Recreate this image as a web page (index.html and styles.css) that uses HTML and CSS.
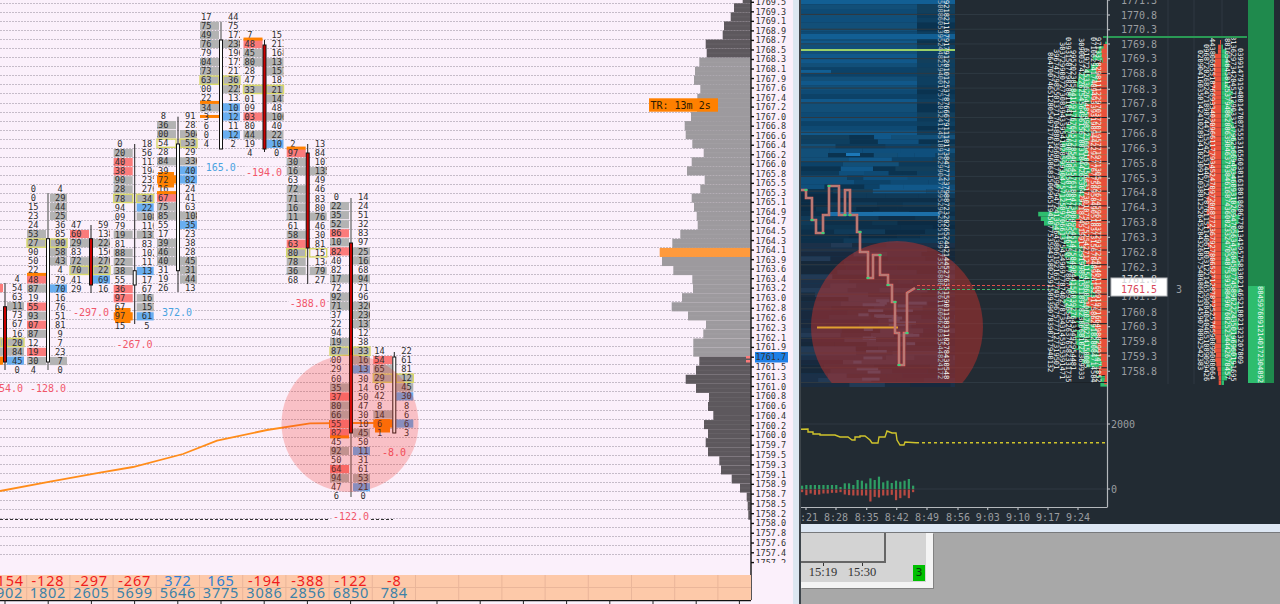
FILE: index.html
```html
<!DOCTYPE html>
<html lang="en">
<head>
    <meta charset="UTF-8">
    <title>Footprint chart</title>
    <link rel="stylesheet" href="styles.css">
</head>
<body>
    <div class="left-pane">
        <svg id="footprint" class="chart" width="793" height="604" viewBox="0 0 793 604"></svg>
    </div>
    <div class="divider"></div>
    <div class="right-pane">
        <svg id="heatmap" class="chart" width="479" height="524" viewBox="801 0 479 524"></svg>
        <div class="title-strip"></div>
        <div class="lower-area">
            <div class="mini-window">
                <div class="mini-inner"></div>
                <div class="mini-foot">
                    <span class="mini-time">15:19</span>
                    <span class="mini-time">15:30</span>
                    <span class="mini-badge">3</span>
                </div>
            </div>
        </div>
    </div>
    <script src="charts.js"></script>
</body>
</html>
```

FILE: styles.css
```css
body {
    margin: 0;
    width: 1280px;
    height: 604px;
    display: flex;
    overflow: hidden;
    background: #a8a8a8;
    font-family: "DejaVu Sans Mono", monospace;
}

.chart {
    display: block;
}

.left-pane {
    width: 793px;
    height: 604px;
    background: #fbf0fb;
}

.divider {
    width: 8px;
    height: 604px;
    box-sizing: border-box;
    background: #dce7f1;
    border-right: 2px solid #3d444a;
}

.right-pane {
    width: 479px;
    height: 604px;
    display: flex;
    flex-direction: column;
}

.title-strip {
    height: 8px;
    background: #dde7f3;
    border-bottom: 1px solid #77797c;
}

.lower-area {
    flex: 1;
    background: #a8a8a8;
}

.mini-window {
    width: 132px;
    height: 55px;
    box-sizing: border-box;
    background: #d4d4d4;
    border-right: 7px solid #f4f4f4;
    border-bottom: 6px solid #f4f4f4;
    box-shadow: 1px 1px 0 #828282;
}

.mini-inner {
    width: 83px;
    height: 28px;
    background: #d3d3d3;
    border-right: 2px solid #666;
    border-bottom: 2px solid #666;
}

.mini-foot {
    position: relative;
    height: 19px;
    font-family: "Liberation Serif", serif;
    font-size: 12.5px;
    color: #333;
}

.mini-time {
    position: absolute;
    top: 2px;
    width: 30px;
    text-align: center;
}

.mini-time:nth-child(1) { left: 7px; }
.mini-time:nth-child(2) { left: 46px; }

.mini-time::before {
    content: '';
    position: absolute;
    left: 15px;
    top: -2px;
    width: 1px;
    height: 3px;
    background: #333;
}

.mini-badge {
    position: absolute;
    left: 112px;
    top: 2px;
    width: 12px;
    height: 16px;
    background: #00c000;
    text-align: center;
    font-family: "DejaVu Sans", sans-serif;
    font-size: 11px;
    line-height: 16px;
    color: #0c3a0c;
}

/* footprint cells */
.cell-g { fill: #b3b3b3; }
.cell-r { fill: #fb7b7b; }
.cell-b { fill: #69aef0; }
.cell-o { fill: #ff8000; }
.cell-y { fill: #b3b3b3; stroke: #d9d96a; stroke-width: 1.4; }
.cell-w { fill: none; stroke: #d9d96a; stroke-width: 1.4; }

.cell-text {
    font-family: "DejaVu Sans Mono", monospace;
    font-size: 8.7px;
    fill: #2e2e2e;
}

.grid-line {
    stroke: #c6bcc9;
    stroke-width: 1;
    stroke-dasharray: 2 1;
}

.bar-red { fill: #cc0000; stroke: #111; stroke-width: 1; }
.bar-white { fill: #fff; stroke: #111; stroke-width: 1; }
.wick { stroke: #222; stroke-width: 1; }
.wick-gray { stroke: #777; stroke-width: 1.4; }

.delta-label {
    font-family: "DejaVu Sans Mono", monospace;
    font-size: 10px;
    text-anchor: middle;
    fill: #f0566a;
}

.delta-blue { fill: #4aa3e0; }
.delta-back { fill: #fbf0fb; }

.vwap {
    fill: none;
    stroke: #ff8c1a;
    stroke-width: 1.8;
}

.zone-circle { fill: rgba(243, 40, 28, 0.24); }

.dash-line {
    stroke: #333;
    stroke-width: 1;
    stroke-dasharray: 3 2;
}

.profile-light { fill: #9d9a9e; }
.profile-dark { fill: #5d585d; }
.profile-poc { fill: #ff9a3c; }
.profile-sep { stroke: rgba(255, 255, 255, 0.06); stroke-width: 1; }

.tr-box { fill: #ff8000; }
.tr-text {
    font-family: "DejaVu Sans Mono", monospace;
    font-size: 10px;
    fill: #2a1a00;
}

.axis-line { stroke: #111; stroke-width: 1.4; }
.axis-text {
    font-family: "DejaVu Sans Mono", monospace;
    font-size: 8.5px;
    fill: #333;
}

.price-box { fill: #1e7fe6; }

.strip-bg { fill: #fdc9a9; }
.strip-line { stroke: #eab69a; stroke-width: 1; }
.strip-text {
    font-family: "Noto Sans", sans-serif;
    font-size: 14.5px;
    letter-spacing: 0.8px;
    text-anchor: middle;
}

.strip-red { fill: #f01c1c; }
.strip-blue { fill: #2f7fd4; }
.strip-vol { fill: #3c82a8; }

/* dark chart */
.dark-bg { fill: #222b33; }
.dark-grid { stroke: #2e3942; stroke-width: 1; }
.dark-axis { stroke: #b4b8bc; stroke-width: 1.2; }
.dark-text {
    font-family: "DejaVu Sans Mono", monospace;
    font-size: 10px;
    fill: #9a9da0;
}

.heat-circle { fill: rgba(190, 50, 45, 0.5); }
.level-green { stroke: #9bd068; stroke-width: 2; }
.level-orange { stroke: #e0a030; stroke-width: 2; }
.level-top { stroke: #2a9a55; stroke-width: 2; }

.step-outer { fill: none; stroke: #e2685f; stroke-width: 2.6; }
.step-inner { fill: none; stroke: #8d8d8d; stroke-width: 0.9; }
.step-tip { fill: #3fcf7a; }
.step-dash-red { stroke: #e0504a; stroke-width: 1; stroke-dasharray: 3 2; }
.step-dash-green { stroke: #43b56a; stroke-width: 1; stroke-dasharray: 3 2; }

.prof-green { fill: #2ebd6e; }
.prof-red { fill: #e8503a; }
.prof-deep { fill: #1f8a4d; }
.prof-gap { fill: #13181c; }
.prof-lines { stroke: #1c2228; stroke-width: 1; }

.tiny-text {
    font-family: "DejaVu Sans Mono", monospace;
    font-size: 7px;
    fill: #f4f7f5;
}

.tiny-faint { fill: #aeb9c0; }

.last-box { fill: #fff; stroke: #b9bcbf; stroke-width: 1; }
.last-text { fill: #d9485a; }
.last-ghost { fill: #d4d6d8; }

.cvd-solid { fill: none; stroke: #cfc42c; stroke-width: 1.4; }
.cvd-dash { stroke: #cfc42c; stroke-width: 1.4; stroke-dasharray: 3 3; }
.hist-up { fill: #2e9e63; }
.hist-down { fill: #b84a42; }
```

FILE: charts.js
```js
const PITCH = 9.07;

// each pair: bar x, first row y, bar kind, body top/bottom, wick top/bottom, rows [left, right]
// suffix: g gray, r red, b blue, o orange, y yellow+gray, w yellow only, ^ orange strip, q thin orange
const pairs = [
    { x: 5, y: 279, kind: 'red', body: [306.7, 362], wick: [283, 370], rows: [
        [null, '4'], ['r', '54'], [null, '63'], [null, '11g'], [null, '73'], [null, '67'], [null, '167'],
        ['y', '20y'], ['g', '84g'], ['o', '45b'], [null, '0']
    ] },
    { x: 48, y: 188.7, kind: 'white', body: [238.7, 362], wick: [193, 370], gray: true, rows: [
        ['0', '4'], ['0', '29g'], ['15', '44g'], ['23', '25g'], ['24', '36'], ['53g', '85'], ['27y', '90y'],
        ['90', '58g'], ['50', '43g'], ['22', '4'], ['48r^', '79'], ['87g', '70b'], ['19', '16'], ['55r', '76'],
        ['93g', '51'], ['07r', '81'], ['87g', '9'], ['12', '7'], ['19r', '23'], ['30g', '7g'], ['4', '0']
    ] },
    { x: 91, y: 225, kind: 'red', body: [238.7, 285], wick: [225, 293], rows: [
        ['47', '59'], ['160r', '138'], ['129g', '224g'], ['183', '156'], ['172g', '270g'], ['70y', '22y'],
        ['141', '69b'], ['29', '16']
    ] },
    { x: 134.7, y: 144, kind: 'white', body: [270.7, 285], wick: [144, 324], rows: [
        ['0', '18'], ['20g', '56'], ['140r', '113'], ['138r', '194'], ['190g', '235'], ['128g', '276'],
        ['78y', '34y'], ['194', '22b'], ['109', '108g'], ['79', '116'], ['19g', '137g'], ['81', '83'],
        ['88g', '102'], ['22g', '117'], ['138g', '13b'], ['55', '17'], ['36r', '67'], ['97r', '16g'],
        ['67', '157g'], ['97o', '61b'], ['15', '5']
    ] },
    { x: 178, y: 116, kind: 'white', body: [144, 270.7], wick: [116.7, 292], rows: [
        ['8', '91'], ['136g', '281'], ['100g', '504g'], ['54w', '53y'], ['128', '291'], ['184g', '336g'],
        ['139', '40b'], ['72o', '82b'], ['16', '24'], ['67r^', '41'], ['75g', '63'], ['85g', '108g'],
        ['55', '35b'], ['17', '23'], ['39g', '38'], ['46g', '28'], ['40g', '45g'], ['31', '31g'], ['19', '44g'],
        ['26', '13']
    ] },
    { x: 221, y: 16.7, kind: 'white', body: [40, 149], wick: [21.7, 149], gray: true, rows: [
        ['17', '44'], ['75g', '75'], ['149g', '172'], ['76g', '238g'], ['179', '196'], ['304g', '175'],
        ['273g', '217'], ['63y', '36y'], ['200', '225g'], ['122', '133'], ['34g^', '10b'], ['3q', '12b'], ['6', '11'],
        ['0', '12b'], ['4', '2']
    ] },
    { x: 264.5, y: 35, kind: 'red', body: [45, 149], wick: [40, 152], rows: [
        ['7', '15'], ['48r^', '213'], ['145g', '168'], ['180g', '13g'], ['128', '157g'], ['147', '181'],
        ['33y', '21y'], ['101', '147g'], ['109', '48'], ['103r', '106g'], ['80', '40'], ['44g', '22g'],
        ['19', '10b'], ['4', '0']
    ] },
    { x: 307.7, y: 144, kind: 'red', body: [153, 248], wick: [144, 284], rows: [
        ['2', '13'], ['97r^', '84'], ['130g', '107'], ['16g', '135g'], ['63', '49'], ['72g', '46'], ['71g', '83'],
        ['116g', '80'], ['111g', '76g'], ['61', '46'], ['58g', '30'], ['63r', '81'], ['80y', '15w'], ['78g', '134'],
        ['136g', '79g'], ['68', '27']
    ] },
    { x: 351, y: 197, kind: 'red', body: [243, 433], wick: [198, 497], gray: true, rows: [
        ['0', '14'], ['22g', '24'], ['35g', '51'], ['52g', '32'], ['86r', '83'], ['110g', '97'], ['182r', '25g'],
        ['140', '16g'], ['182', '68'], ['117g', '94g'], ['72', '71'], ['92g', '96'], ['71g', '320g'], ['237', '230g'],
        ['122', '137g'], ['94', '121'], ['119g', '38'], ['87y', '33y'], ['300', '16g'], ['129', '13b'], ['60', '30'],
        ['35g', '14'], ['37r', '50'], ['80g', '47'], ['66g', '30'], ['55r', '10'], ['82r', '45g'], ['45^', '50'],
        ['92g', '11b'], ['50', '31'], ['64r', '61'], ['94g', '53g'], ['47', '21b'], ['6', '0']
    ] },
    { x: 394.3, y: 351, kind: 'white', body: [357, 433], wick: [352, 433], rows: [
        ['14', '22'], ['54r', '61'], ['65g', '81'], ['29y', '12y'], ['69', '45g'], ['42', '30b'], ['8', '8'],
        ['14g', '6'], ['6o', '6b'], ['1', '3']
    ] }
];

const orangeBoxes = [[115, 308, 15.5, 15], [158, 172, 16, 15.5], [375, 419, 15, 13.5], [329, 420, 20, 8]];

const deltaLabels = [
    ['-154.0', 5, 392], ['-128.0', 48, 392], ['-297.0', 91, 315.5], ['372.0', 177, 315.5, 1],
    ['-267.0', 134.5, 347.5], ['165.0', 220.7, 171, 1], ['-194.0', 264, 175.5], ['-388.0', 307.7, 306.5],
    ['-122.0', 351, 519.5], ['-8.0', 394, 455.5]
];

const profileLefts = [
    742.7, 734, 730.7, 724, 722.7, 705.7, 706.7, 699.3, 695, 694, 700.3, 697.3, 697, 691, 684.7, 685.7, 692.3,
    703.7, 691.7, 687, 704.7, 700.3, 691.7, 694, 696.7, 697.7, 680.3, 672.3, 659.7, 662, 673.3, 692.3, 693, 682,
    671.7, 688, 706, 703.3, 693.3, 693.3, 699.3, 696, 685.7, 696, 709, 708, 713.3, 704, 708, 705.7, 708, 719.3,
    721, 731.7, 740, 746.7, 747.7, 748.3
];

const axisPrices = [
    '1769.5', '1769.3', '1769.1', '1768.9', '1768.7', '1768.5', '1768.3', '1768.1', '1767.9', '1767.6', '1767.4',
    '1767.2', '1767.0', '1766.8', '1766.6', '1766.4', '1766.2', '1766.0', '1765.8', '1765.5', '1765.3', '1765.1',
    '1764.9', '1764.7', '1764.5', '1764.3', '1764.1', '1763.9', '1763.6', '1763.4', '1763.2', '1763.0', '1762.8',
    '1762.6', '1762.3', '1762.1', '1761.9', '1761.7', '1761.5', '1761.3', '1761.0', '1760.8', '1760.6', '1760.4',
    '1760.2', '1760.0', '1759.7', '1759.5', '1759.3', '1759.1', '1758.9', '1758.7', '1758.5', '1758.2', '1758.0',
    '1757.8', '1757.6', '1757.4', '1757.2'
];

const stripDelta = [
    ['-154', 7.5, 'red'], ['-128', 48, 'red'], ['-297', 91.5, 'red'], ['-267', 134.7, 'red'], ['372', 178, 'blue'],
    ['165', 221, 'blue'], ['-194', 264.5, 'red'], ['-388', 307.7, 'red'], ['-122', 351, 'red'], ['-8', 394.3, 'red']
];
const stripVolume = ['2902', '1802', '2605', '5699', '5646', '3775', '3086', '2856', '6850', '784'];

const darkPrices = [
    ['1771.3', 0], ['1770.8', 15], ['1770.3', 29.7], ['1769.8', 44], ['1769.3', 58.7], ['1768.8', 73.7],
    ['1768.3', 89.3], ['1767.8', 103.7], ['1767.3', 118.3], ['1766.8', 133.3], ['1766.3', 148], ['1765.8', 163.7],
    ['1765.3', 178.3], ['1764.8', 192.7], ['1764.3', 207.3], ['1763.8', 222], ['1763.3', 237.3], ['1762.8', 252.3],
    ['1762.3', 267], ['1761.3', 296.7], ['1760.8', 312], ['1760.3', 326.7], ['1759.8', 341.3], ['1759.3', 356],
    ['1758.8', 371.3]
];

const darkTimes = [
    ['8:21', 806], ['8:28', 836], ['8:35', 866.7], ['8:42', 896.7], ['8:49', 927], ['8:56', 958], ['9:03', 987.7],
    ['9:10', 1018], ['9:17', 1048], ['9:24', 1078]
];

const greenEdge = [
    [37, 1105], [50, 1098], [60, 1093], [77, 1077], [95, 1068], [117, 1068], [133, 1063], [160, 1062], [187, 1058],
    [208, 1058], [212, 1040], [220, 1040], [223, 1050], [237, 1062], [253, 1065], [263, 1070], [280, 1072],
    [297, 1063], [310, 1070], [327, 1077], [347, 1077], [360, 1085], [370, 1097], [383, 1103]
];
const redEdge = [
    [44, 1105], [50, 1103], [67, 1098], [100, 1088], [167, 1090], [200, 1080], [217, 1077], [233, 1078], [253, 1083],
    [267, 1093], [293, 1093], [300, 1087], [317, 1092], [340, 1098], [367, 1100], [383, 1105]
];
const red2Edge = [[40, 1219], [60, 1214], [100, 1212], [200, 1208], [260, 1209], [300, 1212], [383, 1218]];
const green2Edge = [[40, 1222], [50, 1226], [100, 1232], [200, 1238], [300, 1238], [360, 1235], [383, 1224]];

const stepPath = [
    [801, 190], [806, 190], [806, 198], [812, 198], [812, 220], [816, 220], [816, 233], [823, 233], [823, 215],
    [829, 215], [829, 186], [839, 186], [839, 215], [845, 215], [845, 190], [850, 190], [850, 215], [857, 215],
    [857, 232], [860, 232], [860, 252], [868, 252], [868, 278], [873, 278], [873, 255], [880, 255], [880, 275],
    [888, 275], [888, 285], [892, 285], [892, 302], [895, 302], [895, 333], [899, 333], [899, 365], [904, 365],
    [904, 333], [907, 333], [907, 293], [915, 288]
];

const cvdPath = [
    [801, 429.3], [808, 429], [808, 432], [813, 432], [813, 434], [820, 434], [820, 435], [835, 435], [840, 437],
    [848, 437], [852, 440], [855, 440], [855, 437], [860, 437], [860, 436], [865, 436], [870, 440], [872, 443],
    [878, 443], [879, 437], [885, 437], [887, 431], [892, 433], [896, 433], [897, 440], [900, 445], [904, 445],
    [905, 442], [916, 442.7]
];

const histUp = [10, 12, 12, 12, 12, 12, 12, 12, 12, 6, 17, 17, 12, 27, 25, 17, 32, 27, 37, 20, 25, 18, 25, 22, 25, 30, 10];
const histDown = [8, 17, 12, 16, 15, 12, 12, 10, 10, 8, 15, 17, 18, 18, 18, 18, 36, 22, 24, 18, 18, 16, 32, 26, 18, 26, 8];

// small seeded random so the picture is the same on every load
let seed = 4711;
function rnd() {
    seed = (seed * 16807) % 2147483647;
    return seed / 2147483647;
}

function pick(list) {
    return list[Math.floor(rnd() * list.length)];
}

function digits(count) {
    let out = '';
    for (let i = 0; i < count; i++) {
        out += Math.floor(rnd() * 10);
    }
    return out;
}

function rect(x, y, w, h, cls, fill) {
    const paint = fill ? ` fill="${fill}"` : '';
    return `<rect x="${x}" y="${y}" width="${w}" height="${h}" class="${cls}"${paint}/>`;
}

function line(x1, y1, x2, y2, cls) {
    return `<line x1="${x1}" y1="${y1}" x2="${x2}" y2="${y2}" class="${cls}"/>`;
}

function text(x, y, str, cls, extra) {
    return `<text x="${x}" y="${y}" class="${cls}" ${extra || ''}>${str}</text>`;
}

function points(list) {
    return list.map(p => p.join(',')).join(' ');
}

// value of a [y, x] edge table at height y
function edgeAt(edge, y) {
    for (let i = 1; i < edge.length; i++) {
        if (y <= edge[i][0]) {
            const t = (y - edge[i - 1][0]) / (edge[i][0] - edge[i - 1][0]);
            return edge[i - 1][1] + (edge[i][1] - edge[i - 1][1]) * t;
        }
    }
    return edge[edge.length - 1][1];
}

// profile drawn as rows, so the edge comes out stepped like the real thing
function steppedProfile(edge, rightFn, cls, jitter, gaps) {
    let out = '';
    const first = edge[0][0];
    const last = edge[edge.length - 1][0];
    for (let y = first; y < last; y += 4.6) {
        const left = edgeAt(edge, y) + (rnd() - 0.5) * jitter;
        const right = rightFn(y);
        if (right > left) out += rect(left, y, right - left, 4.6, cls);
        if (gaps && rnd() < 0.28) {
            out += rect(left, y, 3 + rnd() * 6, 3.2, 'prof-gap');
        }
    }
    return out;
}

function drawCell(value, barX, cy, side, clipId) {
    if (value === null) return '';
    const m = value.match(/^(\d*)([a-z]?)(\^?)$/);
    const x = side === 'left' ? barX - 21 : barX + 2;
    const w = side === 'left' ? 19 : 17;
    let out = '';
    if (m[2] === 'q') {
        out += rect(x, cy - 1.5, w, 3, 'cell-o');
    } else if (m[2]) {
        out += rect(Math.max(x, 0), cy - 4.1, w + Math.min(x, 0), 8.2, 'cell-' + m[2]);
    }
    if (m[3]) {
        out += rect(x, cy - 6.5, w, 3, 'cell-o');
    }
    if (!m[1]) return out;
    const single = m[1].length === 1 ? 2.6 : 0;
    const tx = side === 'left' ? barX - 9.5 - single : barX + 7 + single;
    const anchor = side === 'left' ? 'end' : 'start';
    return out + text(tx, cy + 3.1, m[1], 'cell-text', `text-anchor="${anchor}" clip-path="url(#${clipId})"`);
}

function buildFootprint() {
    let defs = '<defs>';
    let grid = '';
    let cells = '';
    let bars = '';

    for (let k = -1; k < 61; k++) {
        const y = Math.round(12.2 + 9.03 * k) + 0.5;
        if (y > 0 && y < 575) grid += line(0, y, 751, y, 'grid-line');
    }

    pairs.forEach((p, i) => {
        defs += `<clipPath id="cl${i}"><rect x="${p.x - 21}" y="0" width="19" height="604"/></clipPath>`;
        defs += `<clipPath id="cr${i}"><rect x="${p.x + 2}" y="0" width="17" height="604"/></clipPath>`;
        p.rows.forEach((row, r) => {
            const cy = p.y + PITCH * r;
            cells += drawCell(row[0], p.x, cy, 'left', 'cl' + i);
            cells += drawCell(row[1], p.x, cy, 'right', 'cr' + i);
        });
        bars += line(p.x, p.wick[0], p.x, p.wick[1], p.gray ? 'wick-gray' : 'wick');
        bars += rect(p.x - 1.5, p.body[0], 3, p.body[1] - p.body[0], p.kind === 'red' ? 'bar-red' : 'bar-white');
    });
    defs += '<clipPath id="axisClip"><rect x="751" y="0" width="42" height="563"/></clipPath></defs>';

    let boxes = '';
    orangeBoxes.forEach(b => { boxes += rect(b[0], b[1], b[2], b[3], 'cell-o'); });

    let labels = '';
    labels += line(0, 519.5, 330, 519.5, 'dash-line') + line(371, 519.5, 393, 519.5, 'dash-line');
    deltaLabels.forEach(d => {
        const w = d[0].length * 6.1 + 2;
        labels += rect(Math.max(d[1] - w / 2, 0), d[2] - 9, w, 11, 'delta-back');
        labels += text(d[1], d[2], d[0], d[3] ? 'delta-label delta-blue' : 'delta-label');
    });

    const vwap = `<polyline class="vwap" points="0,491 50,481.7 100,472.7 133,467 183,454 217,440.7 267,430 310,423.3 350,423 390,423"/>`;
    const zone = '<circle cx="350" cy="423.5" r="68.5" class="zone-circle"/>';

    let profile = '';
    profileLefts.forEach((left, k) => {
        const top = k === 0 ? 0 : 3.3 + 9.06 * (k - 1);
        const h = k === 0 ? 3.3 : 9.06;
        let cls = k <= 6 || k >= 40 ? 'profile-dark' : 'profile-light';
        if (k === 28) cls = 'profile-poc';
        profile += rect(left, top, 750.7 - left, h, cls);
        if (k > 0 && k !== 28 && k !== 29) profile += line(left, top + 4.5, 750.7, top + 4.5, 'profile-sep');
    });
    profile += rect(649, 98.3, 69, 13.4, 'tr-box') + text(650.5, 108.5, 'TR: 13m 2s', 'tr-text');
    profile += rect(746, 356, 5, 2.5, 'cell-r', '#e02020') + rect(746, 360, 5, 2.5, 'cell-r', '#22b04a');

    let axis = line(751, 0, 751, 600, 'axis-line') + line(0, 600.5, 751, 600.5, 'axis-line');
    let axisTexts = '';
    axisPrices.forEach((price, i) => {
        const y = i <= 31 ? 2.3 + 9.53 * i : 308.3 + 9.78 * (i - 32);
        if (y < 563) axis += line(751, y, 754, y, 'axis-line');
        axisTexts += text(755.5, y + 3, price, 'axis-text');
    });
    axis += rect(755, 352, 33, 10.5, 'price-box');
    axis += `<g clip-path="url(#axisClip)">${axisTexts}</g>`;

    let strip = rect(0, 575, 751, 25, 'strip-bg') + line(0, 587.5, 751, 587.5, 'strip-line');
    for (let x = 26.7; x < 751; x += 43.2) {
        strip += line(x, 575, x, 600, 'strip-line');
    }
    stripDelta.forEach((d, i) => {
        strip += text(d[1], 586, d[0], 'strip-text strip-' + d[2]);
        strip += text(i === 0 ? 5 : d[1], 598, stripVolume[i], 'strip-text strip-vol');
    });
    for (let x = 5; x < 751; x += 43.2) {
        strip += line(x, 600, x, 604, 'wick');
    }

    document.getElementById('footprint').innerHTML =
        defs + grid + vwap + boxes + cells + bars + labels + zone + profile + axis + strip;
}

function buildHeat() {
    const bright = ['#0f4f7c', '#11588a', '#0c4268', '#124f78', '#0e4a74'];
    const dim = ['#0c3a5a', '#0e3f60', '#123f5c', '#0a3350'];
    const dark = ['#0d2f49', '#0e3550', '#103a58', '#0b2b44'];
    const low = ['#1b3048', '#18293e', '#223a55', '#16283a', '#1a2c40'];
    let out = rect(801, 0, 154, 383, 'heat-base', '#103a58');

    for (let y = 0; y < 383; y += 4.5) {
        if (y < 135) {
            out += rect(801, y, 116, 4.5, 'heat', pick(bright));
            out += rect(917, y, 38, 4.5, 'heat', pick(dim));
        } else {
            const colors = y < 190 ? bright.concat(dim) : y < 240 ? dark : low;
            let x = 801;
            while (x < 955) {
                const w = Math.min(955 - x, 14 + rnd() * 42);
                out += rect(x, y, w, 4.5, 'heat', pick(colors));
                x += w;
            }
        }
    }
    // bluish patches that show through the circle
    for (let i = 0; i < 26; i++) {
        out += rect(850 + rnd() * 60, 296 + rnd() * 84, 6 + rnd() * 18, 3, 'heat', '#2f5478');
    }
    out += rect(801, 0, 154, 4, 'heat', '#125f94') + rect(801, 34, 154, 5, 'heat', '#125f94');
    out += rect(801, 70, 30, 4, 'heat', '#125f94') + rect(846, 153, 14, 3, 'heat', '#1c78b8');
    out += rect(830, 212, 110, 4, 'heat', '#1c6fa8');
    return out;
}

function buildTinyColumn(x, top, bottom, cls) {
    const count = Math.floor((bottom - top) / 4.21);
    return text(x, top, digits(count), cls, `transform="rotate(90 ${x} ${top})"`);
}

function buildDark() {
    let out = rect(801, 0, 479, 524, 'dark-bg');

    // faint horizontal grid, then vertical one
    for (let y = 14.5; y < 384; y += 14.72) {
        out += line(955, y, 1107, y, 'dark-grid');
    }
    [1168, 1194, 1222].forEach(x => { out += line(x, 0, x, 384, 'dark-grid'); });
    out += line(801, 424, 1107, 424, 'dark-grid') + line(801, 489, 1107, 489, 'dark-grid');

    out += buildHeat();
    for (let y = 14.5; y < 384; y += 14.72) {
        out += line(801, y, 955, y, 'dark-grid');
    }
    out += '<clipPath id="heatClip"><rect x="801" y="0" width="320" height="383"/></clipPath>';
    out += '<circle cx="897" cy="327" r="86" class="heat-circle" clip-path="url(#heatClip)"/>';

    out += line(801, 50, 955, 50, 'level-green');
    out += buildTinyColumn(938, 0, 383, 'tiny-text tiny-faint');
    out += buildTinyColumn(944, 0, 383, 'tiny-text');

    out += line(917, 285.5, 1105, 285.5, 'step-dash-red') + line(917, 289.5, 1105, 289.5, 'step-dash-green');
    out += line(817, 327.5, 898, 327.5, 'level-orange');
    out += `<polyline class="step-outer" points="${points(stepPath)}"/>`;
    out += `<polyline class="step-inner" points="${points(stepPath)}"/>`;
    stepPath.forEach((p, i) => {
        if (i % 3 === 1) out += rect(p[0] - 1.5, p[1] - 1, 3, 2, 'step-tip');
    });

    // first volume profile
    out += steppedProfile(greenEdge, () => 1107, 'prof-green', 7, true);
    out += steppedProfile(redEdge, () => 1107, 'prof-red', 5, false);
    for (let y = 14.5; y < 384; y += 14.72) {
        if (y > 60) out += line(1066, y, 1107, y, 'prof-lines');
    }
    [[1048, 52, 372], [1054, 49, 372], [1060, 42, 383], [1066, 37, 383], [1071, 50, 372], [1079, 38, 383],
        [1084, 48, 372], [1091, 37, 383], [1096, 37, 383]].forEach(c => {
        out += buildTinyColumn(c[0], c[1], c[2], 'tiny-text');
    });

    // second volume profile
    out += steppedProfile(red2Edge, () => 1221, 'prof-red', 3, false);
    const green2Right = y => edgeAt(green2Edge, y) + (rnd() - 0.5) * 4;
    out += steppedProfile([[40, 1221.5], [383, 1221.5]], green2Right, 'prof-green', 0, false);
    [[1198, 50, 370], [1204, 44, 383], [1210, 38, 383], [1225, 38, 383], [1231, 36, 383], [1238, 48, 365]].forEach(c => {
        out += buildTinyColumn(c[0], c[1], c[2], 'tiny-text');
    });

    // third column, deep green with a bright lower part
    out += rect(1248, 0, 26, 286, 'prof-deep');
    out += rect(1248, 286, 26, 97, 'prof-green') + rect(1265, 286, 9, 97, 'prof-deep');
    out += buildTinyColumn(1258, 286, 383, 'tiny-text');

    out += line(1103, 37, 1247, 37, 'level-top');

    // axes
    out += line(1107.5, 0, 1107.5, 507, 'dark-axis') + line(801, 507.5, 1107.5, 507.5, 'dark-axis');
    darkPrices.forEach(p => {
        out += line(1107, p[1], 1110, p[1], 'dark-axis');
        out += text(1121, p[1] + 3.5, p[0], 'dark-text');
    });
    out += line(1107, 424, 1110, 424, 'dark-axis') + text(1111, 427.5, '2000', 'dark-text');
    out += line(1107, 489, 1110, 489, 'dark-axis') + text(1111, 492.5, '0', 'dark-text');
    darkTimes.forEach(t => {
        out += line(t[1], 507, t[1], 510, 'dark-axis');
        out += text(t[1], 521, t[0], 'dark-text', 'text-anchor="middle"');
    });

    out += rect(1111, 278, 56, 18, 'last-box');
    out += text(1121, 283, '1761.8', 'dark-text last-ghost');
    out += text(1121, 293, '1761.5', 'dark-text last-text');
    out += text(1176, 292.5, '3', 'dark-text');

    // lower studies
    out += `<polyline class="cvd-solid" points="${points(cvdPath)}"/>`;
    out += line(916, 442.7, 1107, 442.7, 'cvd-dash');
    histUp.forEach((h, i) => {
        const x = 801 + 4.27 * i;
        out += rect(x, 489 - h / 3, 2.2, h / 3, 'hist-up');
        out += rect(x, 489.5, 2.2, histDown[i] / 3, 'hist-down');
    });

    document.getElementById('heatmap').innerHTML = out;
}

document.addEventListener('DOMContentLoaded', function() {
    buildFootprint();
    buildDark();
});
```
